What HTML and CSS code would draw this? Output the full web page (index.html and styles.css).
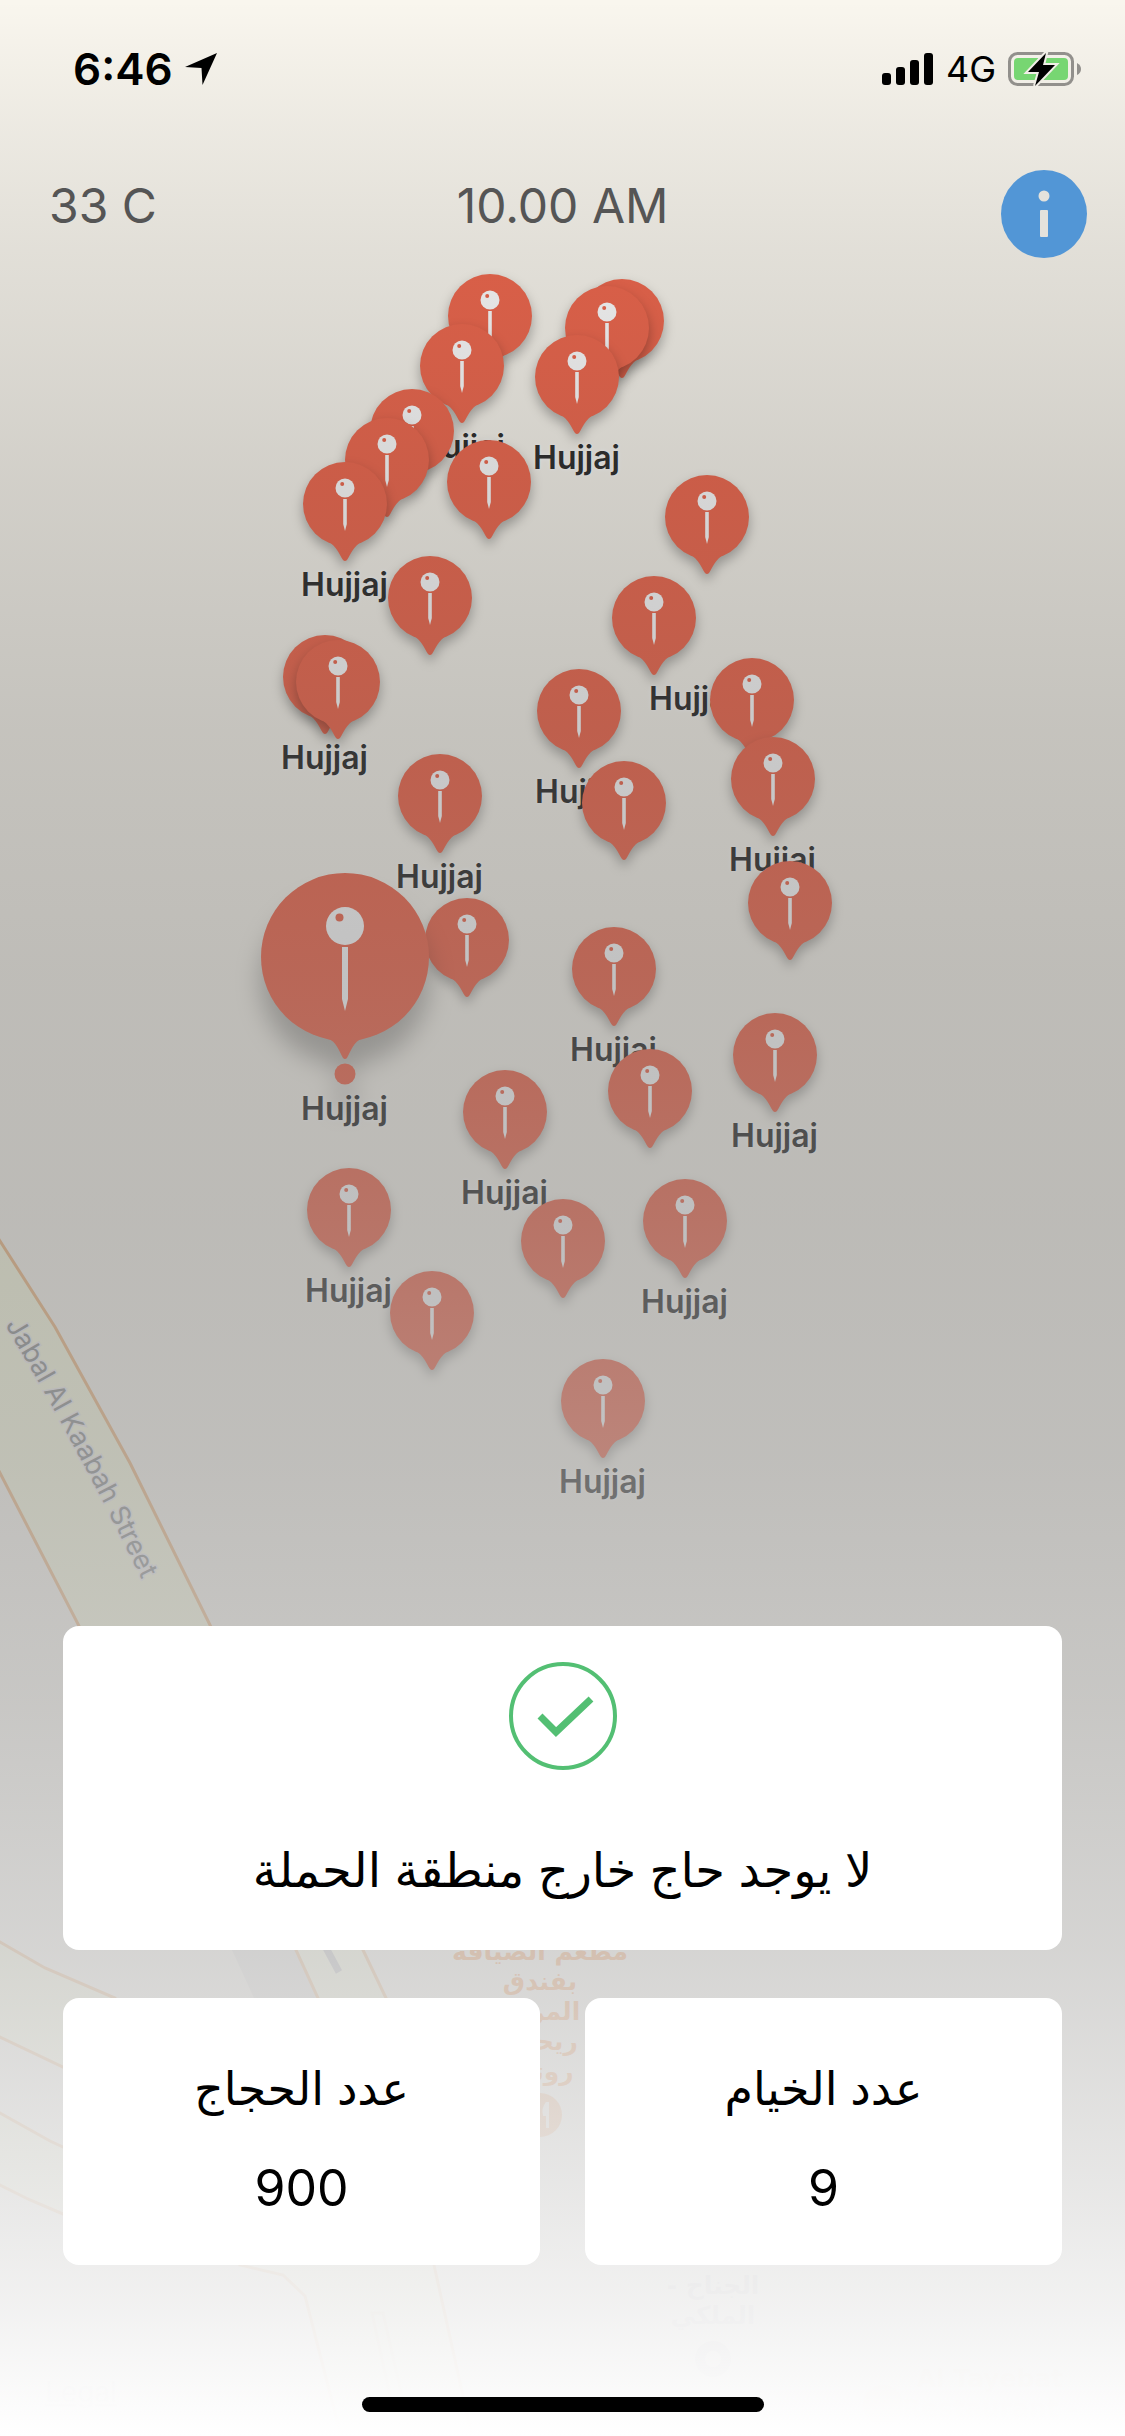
FILE: index.html
```html
<!DOCTYPE html>
<html lang="ar">
<head>
    <meta charset="UTF-8">
    <meta name="viewport" content="width=device-width, initial-scale=1.0">
    <title>Hujjaj Map</title>
    <link rel="stylesheet" href="styles.css">
</head>
<body>
    <div class="map">
        <svg class="roads" width="1125" height="2436" viewBox="0 0 1125 2436">
            <polygon class="block" points="232,1950 296,1950 318,1998 254,1998" />
            <polygon class="area" points="540,2230 700,2340 760,2436 1125,2436 1125,2230" />

            <path class="road" d="M-10 1226 L0 1241 L55 1327 L130 1463 L210 1625 L363 1950 L386 1998 L434 2265 L465 2405 L475 2450 L345 2450 L333 2405 L305 2296 L283 2275 L240 2265 L318 1998 L296 1950 L79 1626 L0 1473 L-10 1453 Z" />
            <path class="road" d="M-10 1937 L0 1942 L45 1968 L115 1998 L120 2085 L63 2067 L0 2037 L-10 2032 Z" />
            <path class="road" d="M-10 2108 L0 2113 L50 2141 L80 2155 L80 2221 L63 2214 L30 2200 L0 2185 L-10 2180 Z" />
            <path class="median" d="M372 2313 H383 L404 2405 H392 Z" />
            <path class="lane" d="M325 1946 L339 1972" />

            <path id="street" class="guide" d="M5 1325 Q80 1450 154 1605" />
            <text class="street-name"><textPath href="#street">Jabal Al Kaabah Street</textPath></text>

            <g class="place food">
                <text x="540" y="1960">مطعم الضيافة</text>
                <text x="540" y="1990">بفندق</text>
                <text x="540" y="2020">المروة</text>
                <text x="540" y="2050">ريحانة</text>
                <text x="540" y="2080">روتانا</text>
                <circle cx="540" cy="2115" r="22" />
                <path class="fork" d="M546 2102 q-5 6 -3 14 h3 v12 h3 v-26 z M532 2102 v26 h3 v-26 z" />
            </g>
            <g class="place hotel">
                <text x="713" y="2294">- الجناح</text>
                <text x="713" y="2324">الملكي</text>
                <circle cx="713" cy="2359" r="18" />
                <circle class="hole" cx="713" cy="2359" r="8" />
            </g>
            <g class="place shop">
                <circle cx="883" cy="2405" r="20" />
                <text x="990" y="2387">Al Tayebat</text>
                <text x="990" y="2417">Restaurant -</text>
            </g>
            <text class="legal" x="45" y="2402">Legal</text>
        </svg>
        <div class="pins" id="pins"></div>
    </div>
    <div class="shade"></div>

    <div class="screen">
        <div class="status-bar">
            <div class="status-group">
                <span class="clock">6:46</span>
                <svg width="32" height="32" viewBox="0 0 32 32">
                    <path d="M32 0 L17.5 32 L16.5 15 L0 14 Z" />
                </svg>
            </div>
            <div class="status-group">
                <svg width="52" height="32" viewBox="0 0 52 32">
                    <rect x="0" y="20" width="9" height="12" rx="3" />
                    <rect x="14" y="14" width="9" height="18" rx="3" />
                    <rect x="28" y="7" width="9" height="25" rx="3" />
                    <rect x="42" y="0" width="9" height="32" rx="3" />
                </svg>
                <span class="network">4G</span>
                <svg width="74" height="36" viewBox="0 0 74 36">
                    <rect x="1.5" y="2.5" width="63" height="31" rx="8" fill="none" stroke="#92908c" stroke-width="3" />
                    <path d="M69 12 q4 2 4 6 q0 4 -4 6 z" fill="#92908c" />
                    <rect x="6" y="7" width="54" height="22" rx="4" fill="#77d672" />
                    <path d="M38 2 L20 21 H31 L27 35 L47 14 H35 Z" fill="#000" stroke="#f1eee7" stroke-width="4" paint-order="stroke" />
                </svg>
            </div>
        </div>

        <div class="top-bar">
            <span class="temperature">33 C</span>
            <span class="time">10.00 AM</span>
            <button class="info" type="button" aria-label="Info">
                <svg width="86" height="88" viewBox="0 0 86 88">
                    <ellipse cx="43" cy="44" rx="43" ry="44" fill="#5296d6" />
                    <circle cx="43" cy="26" r="5.5" fill="#e4e2dc" />
                    <rect x="39" y="40" width="8" height="27" rx="1" fill="#e4e2dc" />
                </svg>
            </button>
        </div>

        <div class="cards" dir="rtl">
            <div class="card status">
                <svg width="108" height="108" viewBox="0 0 108 108" fill="none" stroke="#53bf73">
                    <circle cx="54" cy="54" r="52" stroke-width="4" />
                    <path d="M31 54 L47 70 L82 37" stroke-width="7" />
                </svg>
                <p class="message">لا يوجد حاج خارج منطقة الحملة</p>
            </div>
            <div class="card stat">
                <p class="stat-name">عدد الخيام</p>
                <p class="stat-value">9</p>
            </div>
            <div class="card stat">
                <p class="stat-name">عدد الحجاج</p>
                <p class="stat-value">900</p>
            </div>
        </div>

        <div class="home-bar"></div>
    </div>

    <script src="pins.js"></script>
</body>
</html>
```

FILE: styles.css
```css
body {
    font-family: Inter, "DejaVu Sans", sans-serif;
    background-color: #f9f6ee;
    color: #000;
    margin: 0;
}

p {
    margin: 0;
}

/* map */

.map, .shade {
    position: absolute;
    inset: 0;
    overflow: hidden;
}

.roads {
    position: absolute;
    left: 0;
    top: 0;
}

.shade {
    background: linear-gradient(
        rgba(0, 0, 0, 0),
        rgba(13, 13, 13, 0.05) 5%,
        rgba(26, 26, 26, 0.1) 10%,
        rgba(51, 51, 51, 0.2) 20%,
        rgba(77, 77, 77, 0.3) 30%,
        rgba(102, 102, 102, 0.4) 40%,
        rgba(128, 128, 128, 0.5) 50%,
        rgba(153, 153, 153, 0.6) 60%,
        rgba(179, 179, 179, 0.7) 70%,
        rgba(204, 204, 204, 0.8) 80%,
        rgba(230, 230, 230, 0.9) 90%,
        rgba(242, 242, 242, 0.95) 95%,
        #fff
    );
}

.road {
    fill: #f9fbdf;
    stroke: #edb47c;
    stroke-width: 3;
}

.median {
    fill: none;
    stroke: #edd9b4;
    stroke-width: 3;
}

.lane {
    stroke: #b4b4b8;
    stroke-width: 7;
}

.block {
    fill: #e4e2de;
}

.area {
    fill: #fff;
    opacity: 0.3;
}

.guide {
    fill: none;
}

.street-name {
    font-size: 27px;
    fill: #86898a;
    stroke: #ecebee;
    stroke-width: 3;
    paint-order: stroke;
}

.place text {
    font-family: "DejaVu Sans", sans-serif;
    font-size: 25px;
    font-weight: bold;
    text-anchor: middle;
}

.food {
    fill: #f08c41;
}

.food circle {
    opacity: 0.7;
}

.fork, .hole {
    fill: #f9f5ed;
}

.hotel {
    fill: #c8c4cc;
}

.shop {
    fill: #f3ddc0;
}

.legal {
    font-size: 28px;
    fill: #c0c0c0;
    text-decoration: underline;
}

/* pins */

.pin {
    position: absolute;
    width: 84px;
    margin-left: -42px;
    text-align: center;
}

.pin svg {
    display: block;
    overflow: visible;
    filter: drop-shadow(0 6px 6px rgba(0, 0, 0, 0.3));
}

.pin-large {
    width: 168px;
    margin-left: -84px;
}

.pin-large svg {
    filter: drop-shadow(0 24px 12px rgba(0, 0, 0, 0.28));
}

.balloon {
    fill: #f0674d;
}

.needle {
    fill: #fff;
}

.pin-name {
    display: flex;
    justify-content: center;
    margin-top: 8px;
    font-size: 32px;
    line-height: 32px;
    font-weight: 600;
    color: #2a2a2a;
    text-shadow: 0 0 3px #fff, 0 0 5px #fff;
}

.pin-name-side {
    margin-left: 78px;
}

/* screen */

.screen {
    position: relative;
    min-height: 100vh;
    display: flex;
    flex-direction: column;
    box-sizing: border-box;
    padding-bottom: 24px;
}

.status-bar {
    display: flex;
    justify-content: space-between;
    align-items: center;
    height: 138px;
    padding: 0 43px 0 73px;
}

.status-group {
    display: flex;
    align-items: center;
    gap: 12px;
}

.clock {
    font-size: 44px;
    font-weight: 600;
}

.network {
    font-size: 36px;
}

.top-bar {
    display: grid;
    grid-template-columns: 1fr auto 1fr;
    align-items: start;
    padding: 32px 38px 0;
    font-size: 48px;
    line-height: 72px;
    color: #555;
}

.temperature {
    padding-left: 11px;
}

.info {
    justify-self: end;
    padding: 0;
    border: 0;
    background: none;
    cursor: pointer;
}

.info svg {
    display: block;
}

.cards {
    display: grid;
    grid-template-columns: 1fr 1fr;
    gap: 48px 45px;
    margin-top: auto;
    padding: 0 63px;
}

.card {
    display: flex;
    flex-direction: column;
    align-items: center;
    background-color: #fff;
    border-radius: 16px;
    text-align: center;
}

.status {
    grid-column: 1 / -1;
    gap: 60px;
    padding: 36px 36px 40px;
}

.message {
    font-size: 48px;
    line-height: 80px;
}

.stat {
    gap: 32px;
    padding: 56px 36px 43px;
}

.stat-name {
    font-size: 46px;
    line-height: 68px;
}

.stat-value {
    font-size: 50px;
    line-height: 68px;
}

.home-bar {
    width: 402px;
    height: 15px;
    margin: 132px auto 0;
    border-radius: 8px;
    background-color: #000;
}
```

FILE: pins.js
```js
// x is measured from the middle of the map, y from its top
const pins = [
    { x: -73, y: 274 },
    { x: 59, y: 279 },
    { x: 44, y: 286 },
    { x: -101, y: 324, name: "Hujjaj" },
    { x: 14, y: 335, name: "Hujjaj" },
    { x: -151, y: 389 },
    { x: -176, y: 418 },
    { x: -74, y: 440 },
    { x: -218, y: 462, name: "Hujjaj" },
    { x: 144, y: 475 },
    { x: -133, y: 556 },
    { x: 91, y: 576, name: "Hujjaj", side: true },
    { x: -238, y: 635, name: "Hujjaj" },
    { x: -225, y: 640 },
    { x: 189, y: 658 },
    { x: 16, y: 669, name: "Hujjaj" },
    { x: 210, y: 737, name: "Hujjaj" },
    { x: -123, y: 754, name: "Hujjaj" },
    { x: 61, y: 761 },
    { x: 227, y: 861 },
    { x: -96, y: 898 },
    { x: 51, y: 927, name: "Hujjaj" },
    { x: 212, y: 1013, name: "Hujjaj" },
    { x: 87, y: 1049 },
    { x: -58, y: 1070, name: "Hujjaj" },
    { x: -214, y: 1168, name: "Hujjaj" },
    { x: 122, y: 1179, name: "Hujjaj" },
    { x: 0, y: 1199 },
    { x: -131, y: 1271 },
    { x: 40, y: 1359, name: "Hujjaj" },
    { x: -218, y: 873, name: "Hujjaj", large: true }
];

const smallIcon = `
    <svg width="84" height="99" viewBox="0 0 84 99">
        <circle class="balloon" cx="42" cy="42" r="42" />
        <path class="balloon" d="M24 79 C34 84 36 92 40 98 Q42 100 44 98 C48 92 50 84 60 79 Z" />
        <circle class="needle" cx="42" cy="26" r="9.5" />
        <circle class="balloon" cx="39.2" cy="22" r="2" />
        <path class="needle" d="M40.2 37 H43.8 V62 L42 69 L40.2 62 Z" />
    </svg>`;

const largeIcon = `
    <svg width="168" height="212" viewBox="0 0 168 212">
        <circle class="balloon" cx="84" cy="84" r="84" />
        <path class="balloon" d="M66 165 C76 169 78 178 82 185 Q84 187 86 185 C90 178 92 169 102 165 Z" />
        <circle class="balloon" cx="84" cy="201" r="10.5" />
        <circle class="needle" cx="84" cy="53" r="19" />
        <circle class="balloon" cx="78.5" cy="44.5" r="4" />
        <path class="needle" d="M81 74 H87 V126 L84 138 L81 126 Z" />
    </svg>`;

const map = document.getElementById("pins");

pins.forEach(function (pin) {
    const el = document.createElement("div");
    el.className = pin.large ? "pin pin-large" : "pin";
    el.style.left = "calc(50% + " + pin.x + "px)";
    el.style.top = pin.y + "px";
    el.innerHTML = pin.large ? largeIcon : smallIcon;
    if (pin.name) {
        const name = document.createElement("span");
        name.className = pin.side ? "pin-name pin-name-side" : "pin-name";
        name.textContent = pin.name;
        el.appendChild(name);
    }
    map.appendChild(el);
});
```
